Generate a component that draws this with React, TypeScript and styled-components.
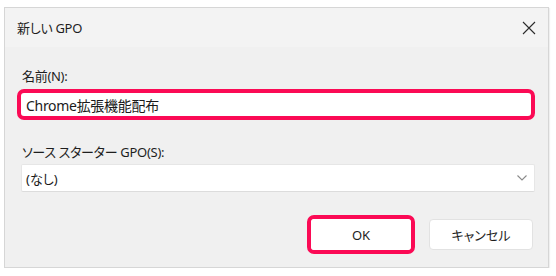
import React from "react";
import styled, { createGlobalStyle } from "styled-components";

const Global = createGlobalStyle`
  html, body { margin: 0; padding: 0; background: #ffffff; }
  body {
    font-family: "Noto Sans", "Noto Sans CJK JP", sans-serif;
    font-feature-settings: "palt" 1;
  }
`;

const RED = "#fb0a55";

const Dialog = styled.div`
  box-sizing: border-box;
  margin: 7px 0 0 4px;
  width: 545px;
  height: 261px;
  border: 1px solid #d6d6d6;
  background: #f0f0f0;
  display: flex;
  flex-direction: column;
  box-shadow: 1px 1px 1px rgba(0, 0, 0, 0.06);
`;

const TitleBar = styled.div`
  height: 39px;
  background: #f3f3f3;
  display: flex;
  align-items: center;
  justify-content: space-between;
  padding: 0 12px 0 12px;
`;

const Title = styled.span`
  font-size: 13px;
  color: #1e1e1e;
  letter-spacing: -0.3px;
`;

const Body = styled.div`
  flex: 1;
  display: flex;
  flex-direction: column;
  padding: 20px 13px 0 12px;
`;

const Label = styled.div<{ $top?: number }>`
  font-size: 13px;
  line-height: 18px;
  color: #1e1e1e;
  padding-left: 5px;
  margin-top: ${(p) => p.$top ?? 0}px;
  letter-spacing: -0.3px;
`;

const Highlight = styled.div`
  box-sizing: border-box;
  border: 4px solid ${RED};
  border-radius: 7px;
  background: #ffffff;
`;

const NameField = styled(Highlight)`
  margin-top: 4px;
  height: 31px;
  display: flex;
  align-items: center;
  padding-left: 5px;
  font-size: 14px;
  color: #1a1a1a;
  letter-spacing: -0.3px;
`;

const Select = styled.div`
  box-sizing: border-box;
  margin: 3px 0 0 4px;
  height: 28px;
  background: #ffffff;
  border: 1px solid #e6e6e6;
  border-bottom-color: #dcdcdc;
  border-radius: 2px;
  display: flex;
  align-items: center;
  justify-content: space-between;
  padding: 0 6px 0 4px;
  font-size: 13px;
  color: #1a1a1a;
`;

const ButtonRow = styled.div`
  margin-top: 23px;
  display: flex;
  justify-content: flex-end;
  align-items: center;
  gap: 14px;
  padding-right: 2px;
`;

const Button = styled.div<{ $w: number }>`
  box-sizing: border-box;
  width: ${(p) => p.$w}px;
  height: 31px;
  background: #ffffff;
  border: 1px solid #e2e2e2;
  border-radius: 4px;
  display: flex;
  align-items: center;
  justify-content: center;
  font-size: 13px;
  color: #1e1e1e;
`;

const OkRing = styled(Highlight)`
  display: flex;
`;

const OkButton = styled(Button)`
  border: none;
  height: 31px;
`;

const CloseIcon = () => (
  <svg width="14" height="14" viewBox="0 0 14 14" style={{ display: "block" }}>
    <path d="M1 1 L13 13 M13 1 L1 13" stroke="#2b2b2b" strokeWidth="1.1" fill="none" />
  </svg>
);

const Chevron = () => (
  <svg width="12" height="8" viewBox="0 0 12 8" style={{ display: "block" }}>
    <path d="M1.5 1.5 L6 6 L10.5 1.5" stroke="#8a8a8a" strokeWidth="1.1" fill="none" />
  </svg>
);

export default function App() {
  return (
    <>
      <Global />
      <Dialog>
        <TitleBar>
          <Title>新しい GPO</Title>
          <CloseIcon />
        </TitleBar>
        <Body>
          <Label>名前(N):</Label>
          <NameField>Chrome拡張機能配布</NameField>
          <Label $top={23}>ソース スターター GPO(S):</Label>
          <Select>
            <span>(なし)</span>
            <Chevron />
          </Select>
          <ButtonRow>
            <OkRing>
              <OkButton $w={100}>OK</OkButton>
            </OkRing>
            <Button $w={104}>キャンセル</Button>
          </ButtonRow>
        </Body>
      </Dialog>
    </>
  );
}
